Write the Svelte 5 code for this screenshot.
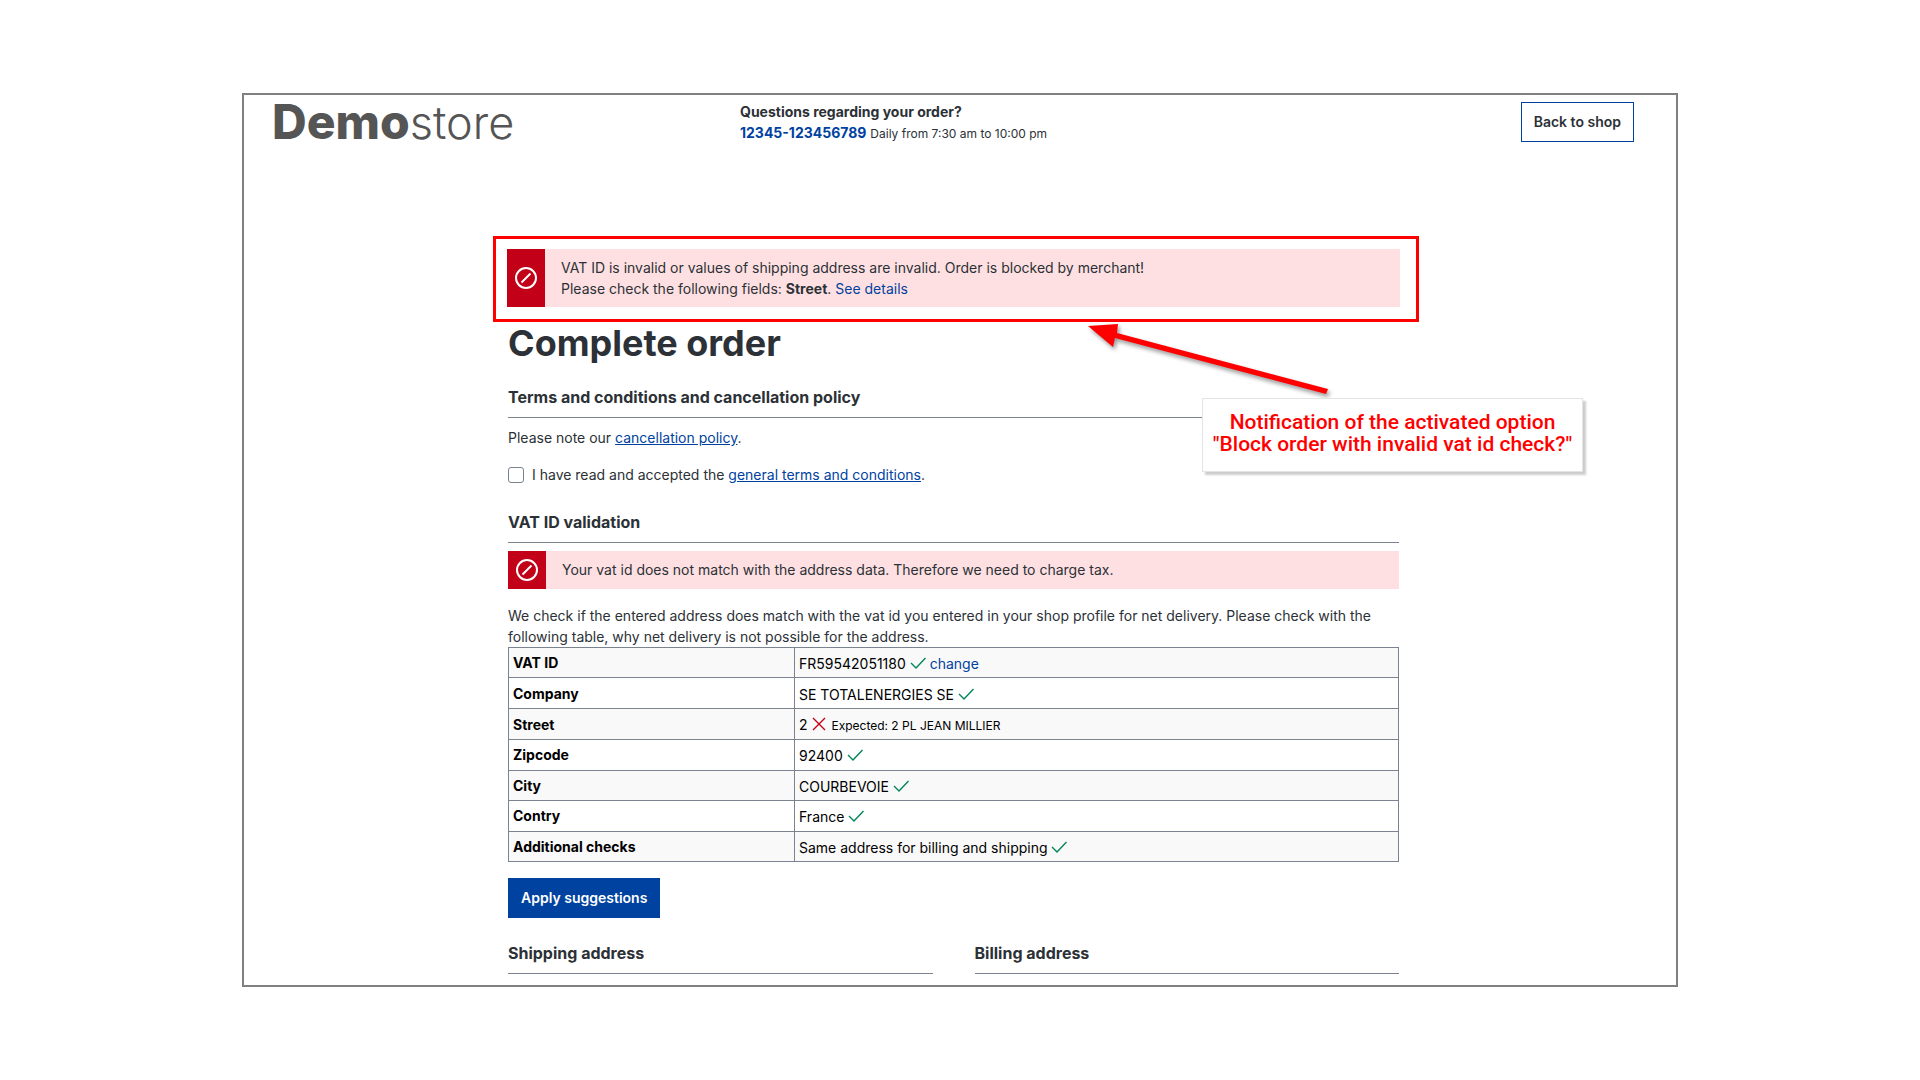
<script lang="ts">
  type CheckRow = {
    label: string;
    value: string;
    valid: boolean;
    expected?: string;
    link?: string;
  };

  const rows: CheckRow[] = [
    { label: 'VAT ID', value: 'FR59542051180', valid: true, link: 'change' },
    { label: 'Company', value: 'SE TOTALENERGIES SE', valid: true },
    { label: 'Street', value: '2', valid: false, expected: '2 PL JEAN MILLIER' },
    { label: 'Zipcode', value: '92400', valid: true },
    { label: 'City', value: 'COURBEVOIE', valid: true },
    { label: 'Contry', value: 'France', valid: true },
    { label: 'Additional checks', value: 'Same address for billing and shipping', valid: true }
  ];

  let accepted = $state(false);
</script>

{#snippet blockedIcon()}
  <div class="alert-icon">
    <svg viewBox="0 0 22 22" width="22" height="22" aria-hidden="true">
      <circle cx="11" cy="11" r="10" />
      <path d="M6.5 15.5l9-9" />
    </svg>
  </div>
{/snippet}

<div class="page">
  <header class="header">
    <a class="logo" href="#home"><b>Demo</b><span>store</span></a>
    <div class="hotline">
      <div><strong>Questions regarding your order?</strong></div>
      <div><a class="phone" href="tel:12345123456789">12345-123456789</a> <small>Daily from 7:30 am to 10:00 pm</small></div>
    </div>
    <a class="btn btn-outline" href="#shop">Back to shop</a>
  </header>

  <main class="checkout">
    <div class="highlight">
      <div class="alert" role="alert">
        {@render blockedIcon()}
        <div class="alert-text">
          VAT ID is invalid or values of shipping address are invalid. Order is blocked by merchant!<br />
          Please check the following fields: <strong>Street</strong>. <a href="#vat">See details</a>
        </div>
      </div>

      <!-- Callout -->
      <svg class="arrow" viewBox="0 0 250 78" width="250" height="78" aria-hidden="true">
        <path d="M2 5L32 3L31 12L242 68L240 73L29 17L27 26Z" />
      </svg>
      <div class="callout">
        Notification of the activated option<br />"Block order with invalid vat id check?"
      </div>
    </div>

    <h1>Complete order</h1>

    <section class="terms">
      <h2>Terms and conditions and cancellation policy</h2>
      <p>Please note our <a href="#cancellation">cancellation policy</a>.</p>
      <div class="accept">
        <input id="tos" type="checkbox" bind:checked={accepted} />
        <label for="tos">I have read and accepted the <a href="#terms">general terms and conditions</a>.</label>
      </div>
    </section>

    <section class="validation" id="vat">
      <h2>VAT ID validation</h2>
      <div class="alert" role="alert">
        {@render blockedIcon()}
        <div class="alert-text">Your vat id does not match with the address data. Therefore we need to charge tax.</div>
      </div>
      <p>
        We check if the entered address does match with the vat id you entered in your shop profile for net
        delivery. Please check with the following table, why net delivery is not possible for the address.
      </p>
      <table>
        <tbody>
          {#each rows as row}
            <tr>
              <th scope="row">{row.label}</th>
              <td>
                {row.value}
                {#if row.valid}
                  <svg class="mark ok" viewBox="0 0 16 16" width="16" height="16" role="img" aria-label="valid">
                    <path d="M1 8l5 5L15.500 3" />
                  </svg>
                {:else}
                  <svg class="mark bad" viewBox="0 0 16 16" width="16" height="16" role="img" aria-label="invalid">
                    <path d="M2 2l12 12M14 2L2 14" />
                  </svg>
                {/if}
                {#if row.expected}<small>Expected: {row.expected}</small>{/if}
                {#if row.link}<a href="#change">{row.link}</a>{/if}
              </td>
            </tr>
          {/each}
        </tbody>
      </table>
      <button class="btn btn-primary" type="button">Apply suggestions</button>
    </section>

    <div class="addresses">
      <h2>Shipping address</h2>
      <h2>Billing address</h2>
    </div>
  </main>
</div>

<style>
  :global(body) {
    margin: 0;
    background: #fff;
  }

  .page {
    box-sizing: border-box;
    margin: 93px 242px;
    border: 2px solid #808080;
    color: #2b3136;
    font-family: Inter, sans-serif;
    font-size: 14px;
    line-height: 21px;
  }

  a {
    color: #0042a0;
    text-decoration: none;
  }

  /* Header */
  .header {
    display: grid;
    grid-template-columns: 468px 1fr auto;
    align-items: start;
    padding: 6px 42px 0 28px;
  }

  .logo {
    color: #555;
    font-size: 48px;
    line-height: 42px;
  }

  .logo b {
    font-weight: 800;
  }

  .logo span {
    font-size: 45px;
    font-weight: 300;
  }

  .phone {
    font-weight: 700;
  }

  small {
    font-size: 12px;
  }

  .btn {
    display: inline-block;
    box-sizing: border-box;
    height: 40px;
    padding: 0 12px;
    border: 1px solid #0042a0;
    font-family: inherit;
    font-size: 14px;
    font-weight: 600;
    line-height: 38px;
  }

  .btn-outline {
    margin-top: 1px;
    color: #2b3136;
  }

  .btn-primary {
    margin-top: 16px;
    background: #0042a0;
    color: #fff;
    cursor: pointer;
  }

  /* Checkout column */
  .checkout {
    max-width: 891px;
    margin: 92px auto 0;
    padding: 0 13px 11px 0;
  }

  .highlight {
    position: relative;
    margin: 0 -20px 0 -15px;
    padding: 10px 16px 12px 11px;
    border: 3px solid #f00;
  }

  .alert {
    display: flex;
    min-height: 38px;
    background: #ffe0e2;
  }

  .alert-icon {
    display: flex;
    align-items: center;
    justify-content: center;
    width: 38px;
    background: #c20017;
  }

  .alert-icon svg {
    fill: none;
    stroke: #fff;
    stroke-width: 2;
  }

  .alert-text {
    flex: 1;
    padding: 8px 16px;
  }

  .arrow {
    position: absolute;
    top: 82px;
    left: 590px;
    fill: #f00;
    filter: drop-shadow(2px 3px 2px rgba(0, 0, 0, 0.4));
  }

  .callout {
    position: absolute;
    top: 159px;
    right: -167px;
    box-sizing: border-box;
    width: 381px;
    padding: 12px 0 16px;
    border: 1px solid #e4e4e4;
    background: #fff;
    box-shadow: 3px 3px 2px rgba(0, 0, 0, 0.2);
    color: #f00;
    font-family: Roboto, sans-serif;
    font-size: 21px;
    font-weight: 500;
    line-height: 22px;
    text-align: center;
    white-space: nowrap;
  }

  h1 {
    margin: 0;
    font-size: 36px;
    font-weight: 700;
    line-height: 42px;
  }

  h2 {
    margin: 0;
    padding-bottom: 8px;
    border-bottom: 1px solid #798490;
    font-size: 16px;
    font-weight: 700;
    line-height: 24px;
  }

  p {
    margin: 0;
  }

  .terms {
    padding-top: 21px;
  }

  .terms p {
    padding: 9px 0 16px;
  }

  .terms a {
    text-decoration: underline;
  }

  .accept {
    display: flex;
    align-items: center;
    gap: 8px;
  }

  .accept input {
    appearance: none;
    box-sizing: border-box;
    width: 16px;
    height: 16px;
    margin: 0;
    border: 1px solid #798490;
    border-radius: 3px;
  }

  .accept input:checked {
    background: #0042a0;
  }

  .validation {
    padding-top: 25px;
  }

  .validation .alert {
    margin: 8px 0 16px;
  }

  table {
    width: 100%;
    height: 215px;
    border-collapse: collapse;
    color: #000;
  }

  th,
  td {
    padding: 4px;
    border: 1px solid #798490;
    text-align: left;
  }

  th {
    width: 277px;
    font-weight: 700;
  }

  td {
    padding: 5px 4px 3px;
  }

  tr:nth-child(odd) {
    background: #f9f9f9;
  }

  .mark {
    fill: none;
    stroke-width: 1.4;
    vertical-align: -2px;
  }

  .ok {
    stroke: #008557;
  }

  .bad {
    stroke: #c20017;
  }

  .addresses {
    display: grid;
    grid-template-columns: 1fr 1fr;
    gap: 42px;
    padding-top: 23px;
  }
</style>
